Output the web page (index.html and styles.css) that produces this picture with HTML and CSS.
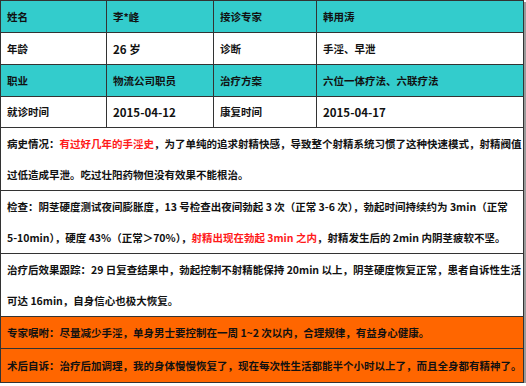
FILE: index.html
```html
<!DOCTYPE html>
<html lang="zh-CN">
<head>
<meta charset="utf-8">
<link rel="stylesheet" href="styles.css">
</head>
<body>
<table class="case">
  <colgroup>
    <col class="c1"><col class="c2"><col class="c3"><col class="c4">
  </colgroup>
  <tr class="teal r1"><td>姓名</td><td>李*峰</td><td>接诊专家</td><td>韩用涛</td></tr>
  <tr class="r2"><td>年龄</td><td class="num">26 岁</td><td>诊断</td><td>手淫、早泄</td></tr>
  <tr class="teal r3"><td>职业</td><td>物流公司职员</td><td>治疗方案</td><td>六位一体疗法、六联疗法</td></tr>
  <tr class="r4"><td>就诊时间</td><td class="num">2015-04-12</td><td>康复时间</td><td class="num">2015-04-17</td></tr>
  <tr class="long"><td colspan="4"><span class="ln">病史情况：<span class="red">有过好几年的手淫史</span>，为了单纯的追求射精快感，导致整个射精系统习惯了这种快速模式，射精阀值</span><span class="ln">过低造成早泄。吃过壮阳药物但没有效果不能根治。</span></td></tr>
  <tr class="long"><td colspan="4"><span class="ln">检查：阴茎硬度测试夜间膨胀度，13 号检查出夜间勃起 3 次（正常 3-6 次），勃起时间持续约为 3min（正常</span><span class="ln">5-10min），硬度 43%（正常＞70%），<span class="red">射精出现在勃起 3min 之内</span>，射精发生后的 2min 内阴茎疲软不坚。</span></td></tr>
  <tr class="long"><td colspan="4"><span class="ln">治疗后效果跟踪：29 日复查结果中，勃起控制不射精能保持 20min 以上，阴茎硬度恢复正常，患者自诉性生活</span><span class="ln">可达 16min，自身信心也极大恢复。</span></td></tr>
  <tr class="orange r8"><td colspan="4">专家嘱咐：尽量减少手淫，单身男士要控制在一周 1~2 次以内，合理规律，有益身心健康。</td></tr>
  <tr class="orange r9"><td colspan="4">术后自诉：治疗后加调理，我的身体慢慢恢复了，现在每次性生活都能半个小时以上了，而且全身都有精神了。</td></tr>
</table>
</body>
</html>
```

FILE: styles.css
```css
html, body {
  margin: 0;
  padding: 0;
  background: #ffffff;
}

.case {
  border-collapse: collapse;
  table-layout: fixed;
  width: 523px;
  margin: 0;
  font-family: "Noto Sans CJK SC", "Microsoft YaHei", sans-serif;
  font-size: 10.5px;
  font-weight: 700;
  color: #111;
  box-shadow: 2px 2px 0 #9a9a9a;
}

.c1 { width: 106px; }
.c2 { width: 107px; }
.c3 { width: 103px; }
.c4 { width: 207px; }

.case td {
  border: 1px solid #333;
  padding: 0 0 0 6px;
  vertical-align: middle;
  line-height: 14px;
  white-space: nowrap;
  overflow: hidden;
}

.num { font-size: 11.5px; }

.teal td { background: #33cccc; }
.orange td { background: #ff6600; }

.r1 { height: 32px; }
.r2 { height: 32px; }
.r3 { height: 32px; }
.r4 { height: 31px; }
.long { height: 63px; }
.r8 { height: 32px; }
.r9 { height: 34px; }

.long td {
  line-height: 31px;
}

.ln {
  display: block;
}

.red { color: #ff1a1a; }
```
